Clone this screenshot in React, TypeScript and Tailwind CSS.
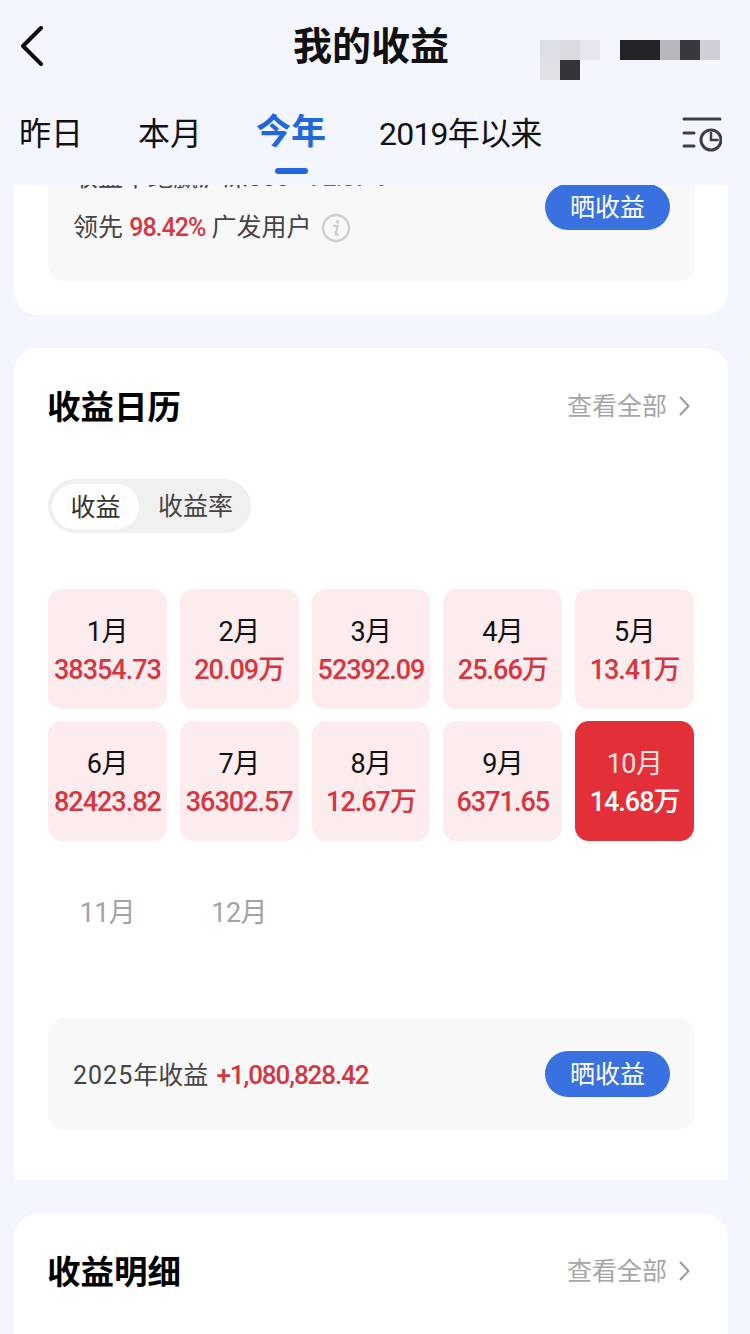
const cjk = 'font-["Roboto","Noto_Sans_CJK_SC",sans-serif]';

const months = [
  { m: '1月', v: '38354.73' },
  { m: '2月', v: '20.09万' },
  { m: '3月', v: '52392.09' },
  { m: '4月', v: '25.66万' },
  { m: '5月', v: '13.41万' },
  { m: '6月', v: '82423.82' },
  { m: '7月', v: '36302.57' },
  { m: '8月', v: '12.67万' },
  { m: '9月', v: '6371.65' },
  { m: '10月', v: '14.68万', active: true },
  { m: '11月' },
  { m: '12月' },
];

function ShareButton() {
  return (
    <button className="w-[125px] h-[46px] shrink-0 rounded-full bg-[#3a71e0] text-white text-[25px] leading-none">
      晒收益
    </button>
  );
}

function SectionHead({ title }: { title: string }) {
  return (
    <div className="flex items-start justify-between">
      <h2 className="pt-[2px] text-[33.5px] leading-[44px] font-bold text-black -ml-px">{title}</h2>
      <div className="flex items-center h-[44px] text-[25px] leading-none text-[#a6a6a6]">
        <span>查看全部</span>
        <svg width="11" height="20" viewBox="0 0 11 20" fill="none" stroke="#9c9c9c" strokeWidth="2" strokeLinecap="round" strokeLinejoin="round" className="ml-[12px] mr-[5px]">
          <path d="M1.5 1.5 9.5 10l-8 8.500" />
        </svg>
      </div>
    </div>
  );
}

function MonthCell({ m, v, active }: { m: string; v?: string; active?: boolean }) {
  if (!v) {
    return (
      <div className="h-[120px] flex items-center justify-center text-[27px] tracking-[-0.5px] text-[#a3a3a3]">{m}</div>
    );
  }
  return (
    <div className={`h-[120px] rounded-[14px] flex flex-col items-center pt-[25px] ${active ? 'bg-[#e32f37]' : 'bg-[#fdecee]'}`}>
      <span className={`text-[27px] leading-[36px] tracking-[-0.5px] ${active ? 'text-[#fde3e4]' : 'text-[#111]'}`}>{m}</span>
      <span className={`pt-[2px] text-[27px] leading-[37px] font-medium tracking-[-1px] whitespace-nowrap ${active ? 'text-white' : 'text-[#d7353f]'}`}>{v}</span>
    </div>
  );
}

function BackIcon() {
  return (
    <svg width="24" height="40" viewBox="0 0 24 40" fill="none" stroke="#111" strokeWidth="4" strokeLinecap="round" strokeLinejoin="round" className="shrink-0">
      <path d="M21 2 3 20l18 18" />
    </svg>
  );
}

function HistoryIcon() {
  return (
    <svg width="40" height="36" viewBox="0 0 40 36" fill="none" stroke="#3d3f44" strokeWidth="3" strokeLinecap="round">
      <path d="M2 2h36M2 16h10M2 29h10" />
      <circle cx="29" cy="23" r="10" />
      <path d="M29 16v7h6.500" strokeWidth="2.500" />
    </svg>
  );
}

function InfoIcon() {
  return (
    <svg width="30" height="30" viewBox="0 0 30 30" fill="none">
      <circle cx="15" cy="15" r="13" stroke="#cfcfcf" strokeWidth="2.400" />
      <circle cx="16.500" cy="8.800" r="1.900" fill="#cfcfcf" />
      <path d="M13 13h3.600l-2 8.500h2.400" stroke="#cfcfcf" strokeWidth="2.400" strokeLinecap="round" strokeLinejoin="round" />
    </svg>
  );
}

export default function App() {
  return (
    <div className={`w-[750px] h-[1334px] overflow-hidden bg-[#f3f6fe] flex flex-col ${cjk}`}>
      {/* 顶部导航 */}
      <div className="h-[185px] shrink-0 z-10 bg-[#f3f6fe]">
        <div className="h-[92px] flex items-center pl-[20px]">
          <BackIcon />
          <h1 className="ml-[249px] pt-[2px] text-[39px] leading-none font-bold text-[#111]">我的收益</h1>
          {/* 打码区域 */}
          <div className="ml-[91px] grid grid-cols-[repeat(3,20px)] grid-rows-[20px_20px] self-start mt-[40px]">
            <div className="bg-[#dcdfe6]" />
            <div className="bg-[#d9dbe1]" />
            <div className="bg-[#e4e6ec]" />
            <div className="bg-[#dfe1e7]" />
            <div className="bg-[#333436]" />
          </div>
          <div className="ml-[20px] flex h-[20px] self-start mt-[40px]">
            <div className="w-[40px] bg-[#222324]" />
            <div className="w-[20px] bg-[#b6b7bb]" />
            <div className="w-[20px] bg-[#38393b]" />
            <div className="w-[20px] bg-[#cfd0d5]" />
          </div>
        </div>
        <div className="flex items-start pl-[19px] pr-[28px]">
          <span className="text-[32px] leading-[84px] text-[#111]">昨日</span>
          <span className="ml-[55px] text-[32px] leading-[84px] text-[#111]">本月</span>
          <div className="ml-[54px] pt-[6px] flex flex-col items-center">
            <span className="text-[35px] leading-[70px] font-bold text-[#2268dc]">今年</span>
            <span className="w-[33px] h-[6px] rounded-full bg-[#2268dc]" />
          </div>
          <span className="ml-[53px] text-[32px] leading-[84px] tracking-[-0.8px] text-[#111]">2019年以来</span>
          <div className="ml-auto mt-[25px]">
            <HistoryIcon />
          </div>
        </div>
      </div>

      {/* 内容区 */}
      <div className="flex-1 overflow-hidden pl-[14px] pr-[22px]">
        <div className="-mt-[60px] bg-white rounded-b-[24px] pl-[34px] pr-[33px] pb-[34px]">
          <div className="bg-[#f8f8f9] rounded-[16px] pl-[25px] pr-[25px] pt-[28px] pb-[28px] flex items-center justify-between">
            <div className="text-[25px] leading-[50px] text-[#444]">
              <p>收益率跑赢沪深300 <span className="text-[#e2353f] font-medium tracking-[-1px]">+72.87%</span></p>
              <p className="flex items-center whitespace-pre">
                领先 <span className="text-[#d7353f] font-medium tracking-[-1px]">98.42%</span> 广发用户
                <span className="ml-[9px]"><InfoIcon /></span>
              </p>
            </div>
            <div className="mt-2"><ShareButton /></div>
          </div>
        </div>

        <div className="mt-[33px] bg-white rounded-t-[24px] pl-[34px] pr-[33px] pt-[36px] pb-[50px]">
          <SectionHead title="收益日历" />
          <div className="mt-[49px] w-[203px] h-[54px] rounded-full bg-[#f0f0f0] flex items-center pl-[4px]">
            <span className="w-[87px] h-[45px] pt-[4px] rounded-full bg-white flex items-center justify-center text-[25px] text-[#333]">收益</span>
            <span className="ml-[19px] pt-[2px] text-[25px] text-[#444]">收益率</span>
          </div>
          <div className="mt-[56px] w-[646px] grid grid-cols-5 gap-x-[13px] gap-y-[12px]">
            {months.map(c => (
              <MonthCell key={c.m} m={c.m} v={c.v} active={c.active} />
            ))}
          </div>
          <div className="mt-[45px] h-[112px] bg-[#f8f8f9] rounded-[16px] pl-[25px] pr-[25px] flex items-center justify-between">
            <p className="pt-[3px] text-[25px] text-[#444] whitespace-pre">
              <span className="tracking-[1px]">2025</span>年收益 <span className="ml-[2px] text-[26px] text-[#d7353f] font-medium tracking-[-1.1px]">+1,080,828.42</span>
            </p>
            <ShareButton />
          </div>
        </div>

        <div className="mt-[34px] bg-white rounded-t-[24px] pl-[34px] pr-[33px] pt-[35px] h-[200px]">
          <SectionHead title="收益明细" />
        </div>
      </div>
    </div>
  );
}
